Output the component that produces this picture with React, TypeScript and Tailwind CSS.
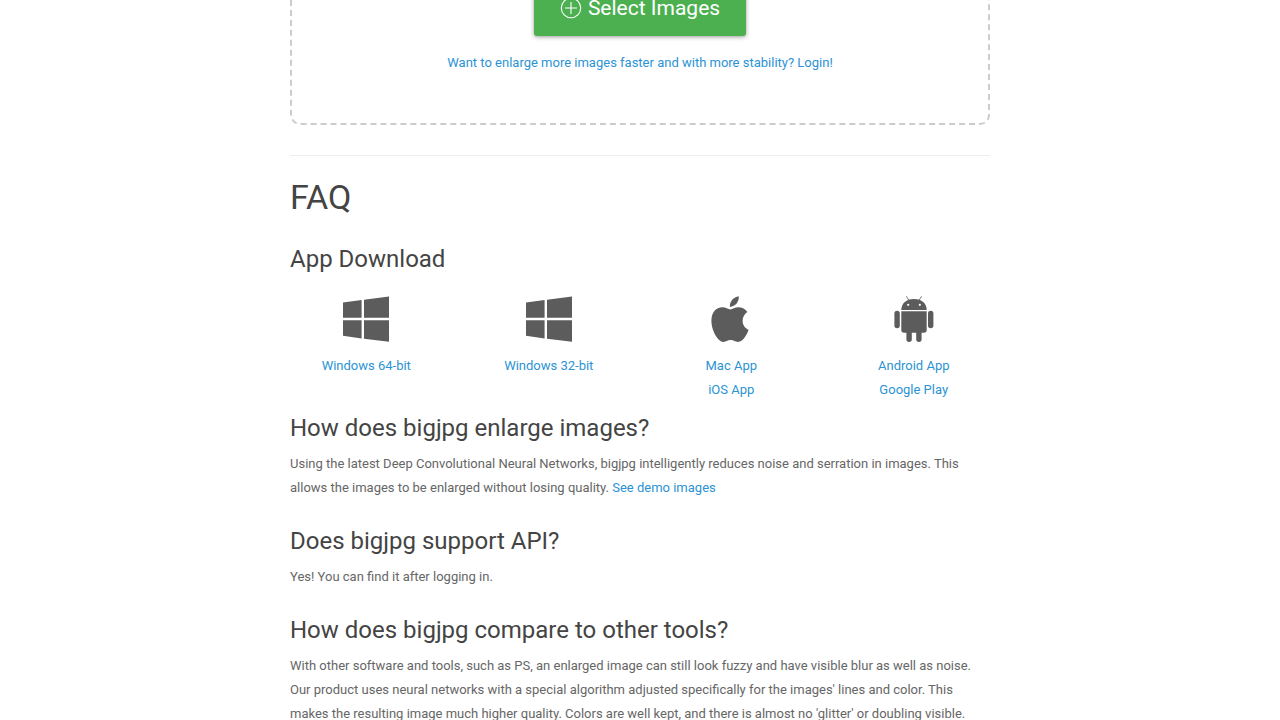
import type { ReactNode } from "react";

function WindowsIcon() {
  return (
    <svg viewBox="0 0 48 48" className="size-12" fill="currentColor" aria-hidden="true">
      <path d="M1 7.6 19.6 5.1V22.8H1ZM22 4.7 47 1.6V22.8H22ZM1 25.2H19.6V43.4L1 40.8ZM22 25.2H47V46.8L22 43.7Z" />
    </svg>
  );
}

function AppleIcon() {
  return (
    <svg viewBox="0 0 48 48" className="size-12" fill="currentColor" aria-hidden="true">
      <path d="M31.8 1.3C32.2 6.5 28.5 11.6 22.9 11.9C22.4 6.8 26.6 1.8 31.8 1.3Z" />
      <path d="M23.3 14.4C21.2 14.4 18.6 12.2 15.4 12.2C9.2 12.2 4.4 17.4 4.4 25.6C4.4 35.8 11 47 16.4 47C19 47 20.4 45.1 23.7 45.1C27 45.1 28 47 31 47C36 47 40.2 39.3 41.6 34.8C38 33.4 35.6 30 35.6 25.8C35.6 22 37.6 18.8 40.4 17C38.4 14.1 35 12.2 31.5 12.2C27.9 12.2 25.5 14.4 23.3 14.4Z" />
    </svg>
  );
}

function AndroidIcon() {
  return (
    <svg viewBox="0 0 48 48" className="size-12" fill="currentColor" aria-hidden="true">
      <path d="M11.3 14.9C11.4 9 15.5 4 24 4S36.6 9 36.7 14.9Z" />
      <path d="M16.6 1.6 19 5.5M31.4 1.6 29 5.5" stroke="currentColor" strokeWidth="0.8" strokeLinecap="round" />
      <circle cx="18.2" cy="9.8" r="1.1" fill="#fff" />
      <circle cx="29.8" cy="9.8" r="1.1" fill="#fff" />
      <path d="M11.3 16.2H36.7V35Q36.7 37.8 33.9 37.8H14.1Q11.3 37.8 11.3 35Z" />
      <rect x="4.4" y="15.8" width="5.4" height="17.4" rx="2.7" />
      <rect x="38" y="15.8" width="5.4" height="17.4" rx="2.7" />
      <path d="M16.4 37H21.8V44.3A2.7 2.7 0 0 1 16.4 44.3ZM26.2 37H31.6V44.3A2.7 2.7 0 0 1 26.2 44.3Z" />
    </svg>
  );
}

function PlusCircleIcon() {
  return (
    <svg viewBox="0 0 22 22" className="size-[22px]" fill="none" stroke="currentColor" strokeWidth="1.1" aria-hidden="true">
      <circle cx="11" cy="11" r="9.7" />
      <path d="M11 5V17M5 11H17" />
    </svg>
  );
}

function Link({ children }: { children: ReactNode }) {
  return (
    <a href="#" className="text-[#2b93d4] hover:underline">
      {children}
    </a>
  );
}

const downloads = [
  { icon: <WindowsIcon />, links: ["Windows 64-bit"] },
  { icon: <WindowsIcon />, links: ["Windows 32-bit"] },
  { icon: <AppleIcon />, links: ["Mac App", "iOS App"] },
  { icon: <AndroidIcon />, links: ["Android App", "Google Play"] },
];

function Question({ title, children }: { title: string; children: ReactNode }) {
  return (
    <section className="mb-[25px]">
      <h3 className="text-2xl text-[#444]">{title}</h3>
      <p className="mt-2">{children}</p>
    </section>
  );
}

export default function App() {
  return (
    <div className="h-screen overflow-hidden bg-white font-['Roboto',sans-serif] text-[13px] leading-6 text-[#666]">
      <main className="mx-auto -mt-20 max-w-[700px]">
        <section className="flex flex-col items-center rounded-[10px] border-2 border-dashed border-[#ccc] pt-[58px] pb-12">
          <button
            type="button"
            className="flex h-14 items-center gap-1.5 rounded-[3px] bg-[#4caf50] px-[26px] text-[21px] text-white shadow-[0_1px_4px_rgba(0,0,0,0.4)]"
          >
            <PlusCircleIcon />
            Select Images
          </button>
          <p className="mt-[15px]">
            <Link>Want to enlarge more images faster and with more stability? Login!</Link>
          </p>
        </section>

        <hr className="mt-[30px] border-[#eee]" />

        <h2 className="mt-[21px] text-[34px] leading-10 text-[#444]">FAQ</h2>

        <section>
          <h3 className="mt-[26px] text-2xl text-[#444]">App Download</h3>
          <ul className="-mx-[15px] mt-5 mb-[10px] grid grid-cols-4">
            {downloads.map(({ icon, links }, i) => (
              <li key={i} className="flex flex-col items-center">
                <span className="mb-[11px] text-[#5c5c5c]">{icon}</span>
                {links.map((label) => (
                  <Link key={label}>{label}</Link>
                ))}
              </li>
            ))}
          </ul>
        </section>

        <Question title="How does bigjpg enlarge images?">
          Using the latest Deep Convolutional Neural Networks, bigjpg intelligently reduces noise and serration in
          images. This allows the images to be enlarged without losing quality. <Link>See demo images</Link>
        </Question>
        <Question title="Does bigjpg support API?">Yes! You can find it after logging in.</Question>
        <Question title="How does bigjpg compare to other tools?">
          With other software and tools, such as PS, an enlarged image can still look fuzzy and have visible blur as
          well as noise. Our product uses neural networks with a special algorithm adjusted specifically for the
          images' lines and color. This makes the resulting image much higher quality. Colors are well kept, and there
          is almost no 'glitter' or doubling visible.
        </Question>
      </main>
    </div>
  );
}
